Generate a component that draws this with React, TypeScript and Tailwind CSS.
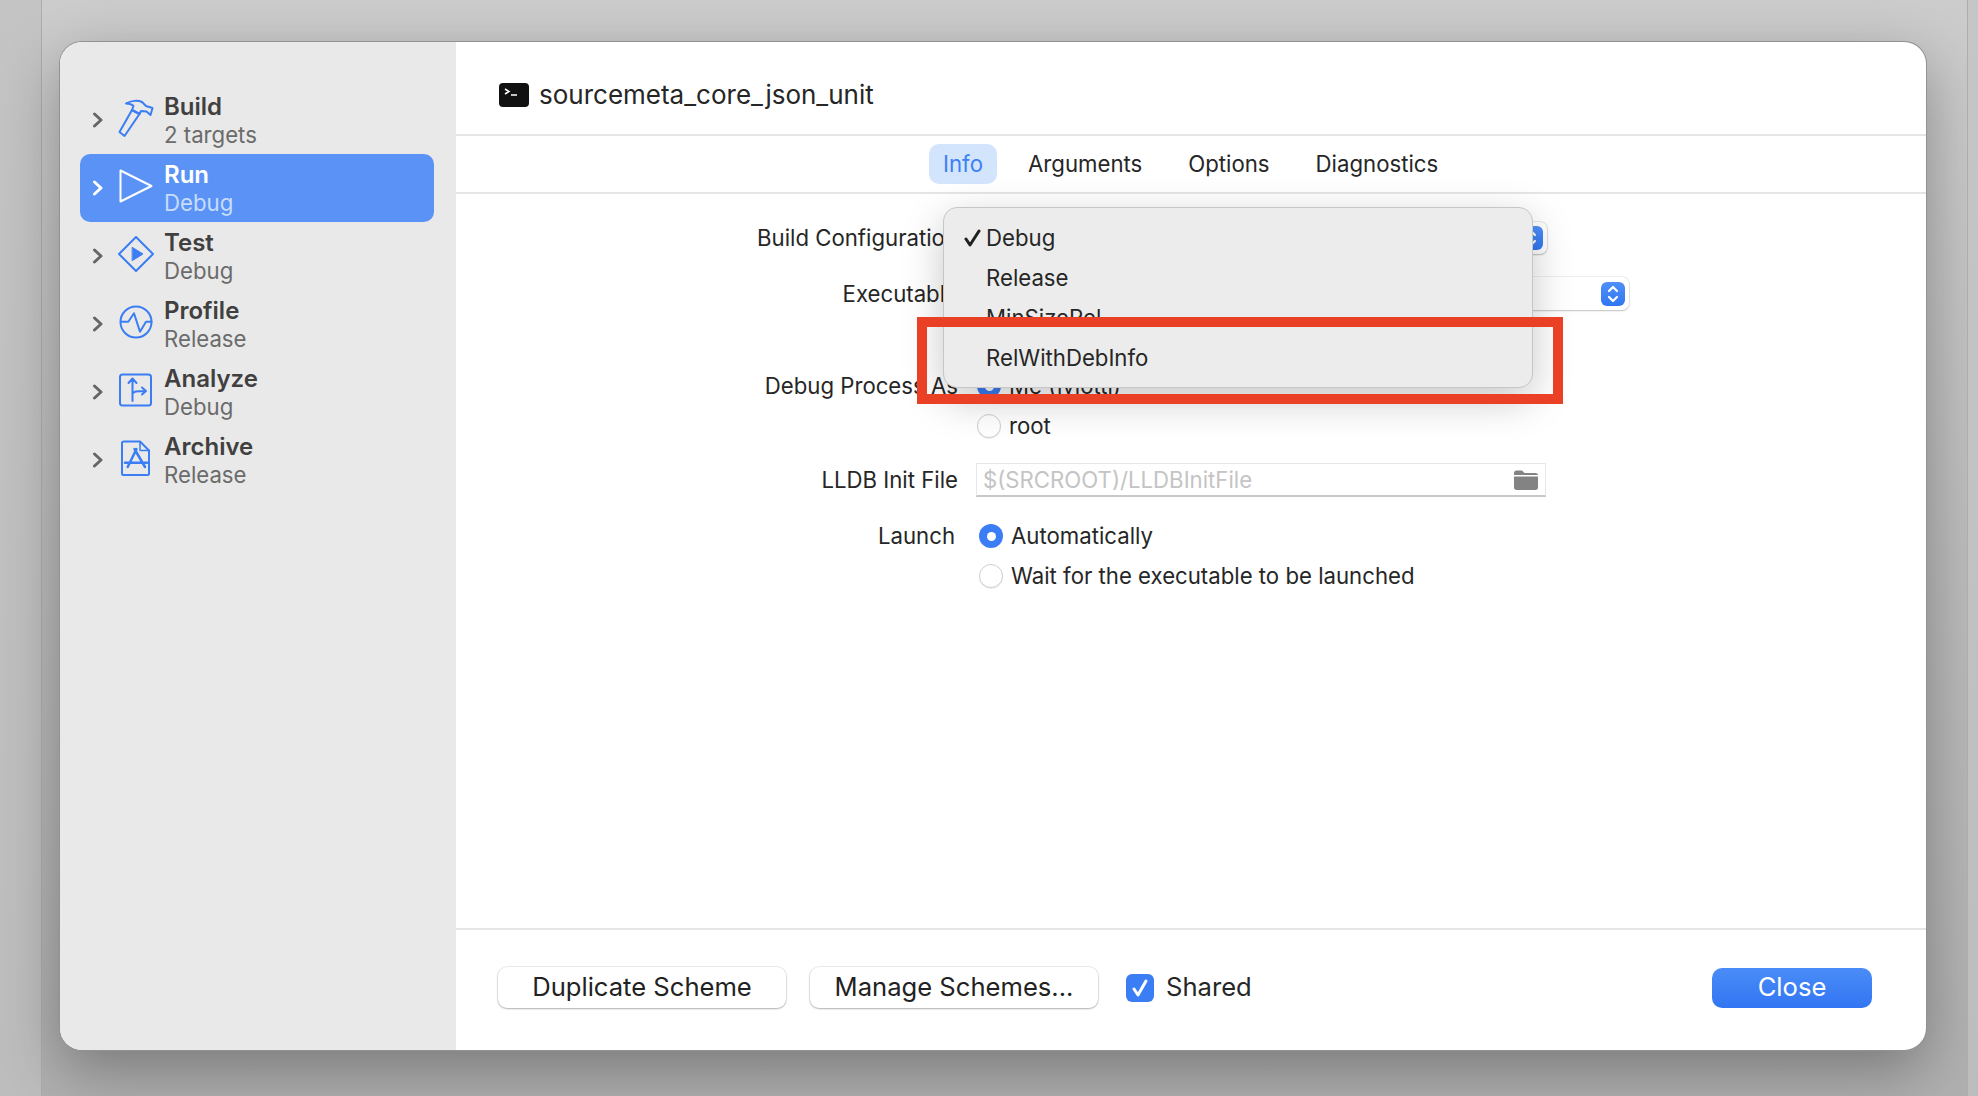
// Xcode scheme editor sheet, Run > Info, with the Build Configuration menu open.
const SCHEME_ROWS = [
  { name: "Build", sub: "2 targets", icon: "build" },
  { name: "Run", sub: "Debug", icon: "run", selected: true },
  { name: "Test", sub: "Debug", icon: "test" },
  { name: "Profile", sub: "Release", icon: "profile" },
  { name: "Analyze", sub: "Debug", icon: "analyze" },
  { name: "Archive", sub: "Release", icon: "archive" },
];

const TABS = ["Info", "Arguments", "Options", "Diagnostics"];

function SchemeIcon({ kind }: { kind: string }) {
  const blue = "#3a7df4";
  return (
    <svg className="overflow-visible" width="36" height="36" viewBox="0 0 36 36" fill="none" stroke={blue} strokeWidth="2" strokeLinejoin="round" strokeLinecap="round">
      {kind === "build" && (
        <>
          <path d="M1.500 30 L14 8 L21.500 12 L6.500 34 Z" />
          <path d="M8 1.500 C13 -1.500 20 -2 24 0 L28 4 L34.500 6 L32.500 13 L28.500 9.500 L23 9 L21.500 12 L14 8 L15.500 4 C13.500 2 11 1.500 8 1.500 Z" />
        </>
      )}
      {kind === "run" && <path d="M2.500 0.500 L33.500 16 L2.500 31.500 Z" stroke="#ffffff" />}
      {kind === "test" && (
        <>
          <path d="M18 -1 L35 16 L18 33 L1 16 Z" />
          <path d="M14.500 9.500 L25 16 L14.500 22.500 Z" fill={blue} strokeWidth="1" />
        </>
      )}
      {kind === "profile" && (
        <>
          <circle cx="18" cy="16" r="15.500" />
          <path d="M3.500 15.700 L10.300 15.700 L16 7.300 L22 25.700 L28 15.700 L33.500 15.700" />
        </>
      )}
      {kind === "analyze" && (
        <>
          <rect x="2" y="0.500" width="31" height="31" rx="2.500" />
          <path d="M14.500 27 L14.500 5 M10.500 9 L14.500 4.500 L18.500 9 M14.500 20 C15.500 17.500 18 17 27.500 17 M24 13.500 L28 17 L24 20.500" />
        </>
      )}
      {kind === "archive" && (
        <>
          <path d="M6 -0.500 L22 -0.500 L31 8.500 L31 31.500 C31 32.500 30 33 29.500 33 L5.500 33 C4.500 33 4 32.500 4 31.500 L4 1 C4 0 4.500 -0.500 6 -0.500 Z" />
          <path d="M22 -0.500 L22 8.500 L31 8.500" strokeWidth="1.500" />
          <path d="M18.500 7 L9.700 25 M16.500 7 L27 25 M7 20.700 L29 20.700" strokeWidth="2.500" />
        </>
      )}
    </svg>
  );
}

function Chevron({ selected }: { selected?: boolean }) {
  return (
    <svg width="12" height="16" viewBox="0 0 12 16" fill="none" stroke={selected ? "#ffffff" : "#666666"} strokeWidth="3" strokeLinecap="round" strokeLinejoin="round">
      <path d="M2.500 2 L9 8 L2.500 14" />
    </svg>
  );
}

function Stepper() {
  return (
    <span className="flex h-[24px] w-[24px] items-center justify-center rounded-[6px] bg-gradient-to-b from-[#4f90f8] to-[#3076f3]">
      <svg width="12" height="18" viewBox="0 0 12 18" fill="none" stroke="#ffffff" strokeWidth="2.200" strokeLinecap="round" strokeLinejoin="round">
        <path d="M2 6 L6 2 L10 6 M2 12 L6 16 L10 12" />
      </svg>
    </span>
  );
}

function Radio({ on }: { on?: boolean }) {
  if (on) {
    return (
      <span className="flex h-[24px] w-[24px] shrink-0 items-center justify-center rounded-full bg-[#3a7df4]">
        <span className="h-[9px] w-[9px] rounded-full bg-white" />
      </span>
    );
  }
  return <span className="h-[24px] w-[24px] shrink-0 rounded-full border border-[#cfcfcf] bg-white shadow-[0_1px_1px_rgba(0,0,0,0.08)]" />;
}

function FormLabel({ children, width = "w-[502px]" }: { children: string; width?: string }) {
  return <span className={`${width} shrink-0 text-right whitespace-nowrap`}>{children}</span>;
}

function PushButton({ children, width }: { children: string; width: string }) {
  return (
    <button className={`${width} h-[41px] rounded-[9px] bg-white text-[25.6px] text-[#222222] shadow-[0_0_0_1px_rgba(0,0,0,0.07),0_1px_2px_rgba(0,0,0,0.25)]`}>
      {children}
    </button>
  );
}

export default function App() {
  return (
    <div className="flex h-[1096px] w-[1978px] overflow-hidden bg-[#c6c6c6] font-['Inter','Liberation_Sans',sans-serif] text-[22.2px] text-[#262626]">
      <div className="w-[42px] shrink-0 border-r border-[#adadad] bg-gradient-to-b from-[#c4c4c4] to-[#bdbdbd]" />

      <div className="flex-1 bg-gradient-to-b from-[#cccccc] via-[#bcbcbc] to-[#b0b0b0] pl-[18px] pt-[42px]">
        <div className="flex h-[1008px] w-[1866px] overflow-hidden rounded-[22px] bg-white shadow-[0_0_0_1px_#929292,0_20px_60px_rgba(0,0,0,0.32)]">
          <aside className="flex w-[396px] shrink-0 flex-col bg-[#e9e9e9] pl-[20px] pr-[22px] pt-[44px]">
            {SCHEME_ROWS.map((row) => (
              <div
                key={row.name}
                className={`flex h-[68px] items-center rounded-[10px] ${row.selected ? "bg-[#5a93f5]" : ""}`}
              >
                <span className="ml-[12px] flex w-[12px] justify-center">
                  <Chevron selected={row.selected} />
                </span>
                <span className="ml-[14px] flex w-[36px] justify-center">
                  <SchemeIcon kind={row.icon} />
                </span>
                <div className="ml-[10px] mt-[2px] flex flex-col leading-[28px]">
                  <span className={`text-[24px] font-semibold ${row.selected ? "text-white" : "text-[#404040]"}`}>{row.name}</span>
                  <span className={row.selected ? "text-[#c8dcfc]" : "text-[#6b6b6b]"}>{row.sub}</span>
                </div>
              </div>
            ))}
          </aside>

          <main className="relative flex flex-1 flex-col">
            <header className="flex h-[94px] items-center border-b-2 border-[#e5e5e5] pl-[43px] pt-[13px]">
              <span className="flex h-[24px] w-[30px] items-start rounded-[4px] bg-[#111111] pl-[5px] pt-[5px]">
                <svg width="14" height="12" viewBox="0 0 14 12" fill="none" stroke="#ffffff" strokeWidth="1.500">
                  <path d="M1 1 L5 3.500 L1 6 M7 7 L13 7" />
                </svg>
              </span>
              <span className="ml-[10px] text-[26px]">sourcemeta_core_json_unit</span>
            </header>

            <nav className="flex h-[58px] items-center border-b-2 border-[#e5e5e5] pl-[473px]">
              <span className="flex h-[40px] w-[68px] items-center justify-center rounded-[10px] bg-[#d3e4fd] text-[#3b80f5]">{TABS[0]}</span>
              <span className="ml-[31px]">{TABS[1]}</span>
              <span className="ml-[46px]">{TABS[2]}</span>
              <span className="ml-[46px]">{TABS[3]}</span>
            </nav>

            <section className="flex flex-1 flex-col">
              <div className="mt-[28px] flex h-[32px] items-center">
                <FormLabel>Build Configuration</FormLabel>
                <div className="ml-[14px] flex h-[32px] w-[575px] items-center justify-end rounded-[7px] bg-white pr-[4px] shadow-[0_0_0_1px_rgba(0,0,0,0.08),0_1px_2px_rgba(0,0,0,0.2)]">
                  <Stepper />
                </div>
              </div>
              <div className="mt-[23px] flex h-[33px] items-center">
                <FormLabel>Executable</FormLabel>
                <div className="ml-[14px] flex h-[33px] w-[657px] items-center justify-end rounded-[7px] bg-white pr-[4px] shadow-[0_0_0_1px_rgba(0,0,0,0.06),0_1px_2px_rgba(0,0,0,0.2)]">
                  <Stepper />
                </div>
              </div>

              <div className="mt-[60px] flex h-[32px] items-center">
                <FormLabel>Debug Process As</FormLabel>
                <div className="ml-[19px] flex items-center gap-[8px]">
                  <Radio on />
                  <span>Me (jviotti)</span>
                </div>
              </div>
              <div className="mt-[8px] flex h-[32px] items-center pl-[521px]">
                <Radio />
                <span className="ml-[8px]">root</span>
              </div>

              <div className="mt-[21px] flex h-[34px] items-center">
                <FormLabel>LLDB Init File</FormLabel>
                <div className="ml-[18px] flex h-[34px] w-[570px] items-center justify-between border border-[#e6e6e6] border-b-2 border-b-[#c8c8c8] pl-[6px] pr-[7px]">
                  <span className="text-[#c4c4c4]">$(SRCROOT)/LLDBInitFile</span>
                  <svg width="24" height="20" viewBox="0 0 24 20" fill="#838383">
                    <path d="M0 3 C0 1.500 1 0.500 2.500 0.500 L8 0.500 L10.500 3 L21.500 3 C23 3 24 4 24 5 L0 5 Z M0 6.500 L24 6.500 L24 17.500 C24 19 23 20 21.500 20 L2.500 20 C1 20 0 19 0 17.500 Z" />
                  </svg>
                </div>
              </div>

              <div className="mt-[23px] flex h-[32px] items-center">
                <FormLabel width="w-[499px]">Launch</FormLabel>
                <div className="ml-[24px] flex items-center gap-[8px]">
                  <Radio on />
                  <span>Automatically</span>
                </div>
              </div>
              <div className="mt-[8px] flex h-[32px] items-center pl-[523px]">
                <Radio />
                <span className="ml-[8px]">Wait for the executable to be launched</span>
              </div>
            </section>

            <footer className="flex h-[122px] items-center border-t-2 border-[#e5e5e5] pb-[5px] pl-[42px] pr-[54px]">
              <PushButton width="w-[288px]">Duplicate Scheme</PushButton>
              <span className="ml-[24px]">
                <PushButton width="w-[288px]">Manage Schemes...</PushButton>
              </span>
              <span className="ml-[28px] flex h-[28px] w-[28px] items-center justify-center rounded-[6px] bg-[#3a7df4]">
                <svg width="20" height="22" viewBox="0 0 20 22" fill="none" stroke="#ffffff" strokeWidth="3" strokeLinecap="round" strokeLinejoin="round">
                  <path d="M4 12 L8 18 L16 4" />
                </svg>
              </span>
              <span className="ml-[12px] text-[25.6px]">Shared</span>
              <button className="ml-auto h-[40px] w-[160px] rounded-[10px] bg-gradient-to-b from-[#4a8cf7] to-[#3275f3] text-[25.6px] text-white">
                Close
              </button>
            </footer>

            {/* open popup menu, lies over the form */}
            <div className="absolute left-[487px] top-[165px] h-[181px] w-[590px] rounded-[14px] border border-[#c6c6c6] bg-[#ececec] pt-[10px] shadow-[0_12px_40px_rgba(0,0,0,0.22)]">
              {["Debug", "Release", "MinSizeRel", "RelWithDebInfo"].map((item, i) => (
                <div key={item} className="relative flex h-[40px] items-center pl-[42px]">
                  {i === 0 && (
                    <svg className="absolute left-[20px] top-[11px]" width="17" height="18" viewBox="0 0 17 18" fill="none" stroke="#222222" strokeWidth="3" strokeLinecap="round" strokeLinejoin="round">
                      <path d="M2 10 L6 16 L15 2" />
                    </svg>
                  )}
                  {item}
                </div>
              ))}
            </div>

            {/* red annotation drawn on the screenshot */}
            <div className="absolute left-[461px] top-[275px] h-[87px] w-[646px] border-[10px] border-[#ea4025]" />
          </main>
        </div>
      </div>

      <div className="w-[11px] shrink-0 border-l border-[#adadad] bg-gradient-to-b from-[#c6c6c6] to-[#bdbdbd]" />
    </div>
  );
}
